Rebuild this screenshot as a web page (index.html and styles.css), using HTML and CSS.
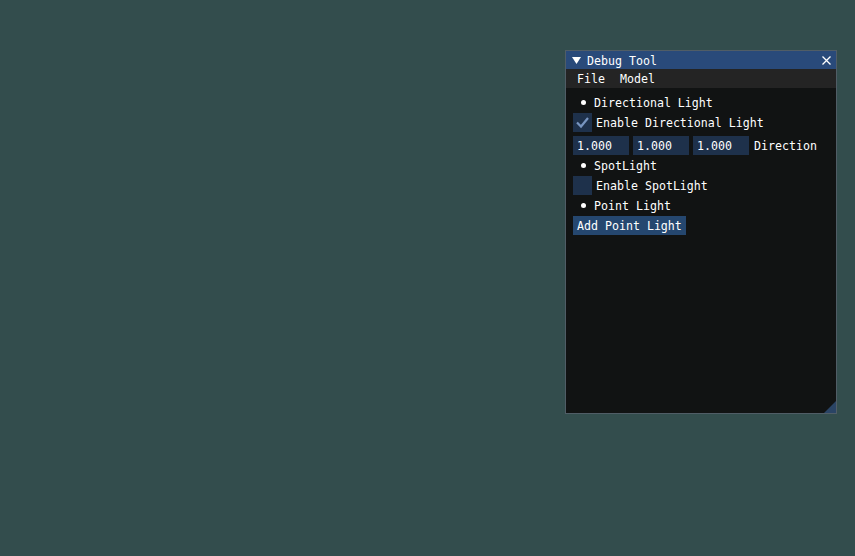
FILE: index.html
```html
<!DOCTYPE html>
<html>
<head>
<meta charset="utf-8">
<link rel="stylesheet" href="styles.css">
</head>
<body>
<div class="win">
  <div class="title">
    <svg class="arrow" width="9" height="7" viewBox="0 0 9 7"><polygon points="0,0 9,0 4.5,7" fill="#fff"/></svg>
    <span class="title-text txt">Debug Tool</span>
    <svg class="close" width="9" height="9" viewBox="0 0 9 9"><path d="M0.5 0.5 L8.5 8.5 M8.5 0.5 L0.5 8.5" stroke="#fff" stroke-width="1.3"/></svg>
  </div>
  <div class="menubar">
    <span class="menu txt">File</span>
    <span class="menu txt">Model</span>
  </div>
  <div class="content">
    <div class="bullet-row"><span class="bullet"></span><span class="txt">Directional Light</span></div>
    <div class="check-row">
      <span class="box">
        <svg width="19" height="19" viewBox="0 0 19 19"><polyline points="4,9.5 8,13.5 15,5" fill="none" stroke="#7895c0" stroke-width="2.2"/></svg>
      </span>
      <span class="txt">Enable Directional Light</span>
    </div>
    <div class="input-row">
      <span class="input">1.000</span>
      <span class="input">1.000</span>
      <span class="input">1.000</span>
      <span class="label txt">Direction</span>
    </div>
    <div class="bullet-row"><span class="bullet"></span><span class="txt">SpotLight</span></div>
    <div class="check-row">
      <span class="box"></span>
      <span class="txt">Enable SpotLight</span>
    </div>
    <div class="bullet-row"><span class="bullet"></span><span class="txt">Point Light</span></div>
    <div class="btn-row"><span class="button">Add Point Light</span></div>
  </div>
  <svg class="grip" width="12" height="12" viewBox="0 0 12 12"><polygon points="12,0 12,12 0,12" fill="#2a4465"/></svg>
</div>
</body>
</html>
```

FILE: styles.css
```css
html, body {
  margin: 0;
  padding: 0;
  width: 855px;
  height: 556px;
  background: #334d4d;
  overflow: hidden;
}
body {
  font-family: "DejaVu Sans Mono", "Liberation Mono", monospace;
  font-size: 11.62px;
  color: #ffffff;
}
.win {
  position: absolute;
  left: 565px;
  top: 50px;
  width: 272px;
  height: 364px;
  box-sizing: border-box;
  border: 1px solid #505d66;
  background: #111313;
  display: flex;
  flex-direction: column;
}
.txt {
  padding-top: 2px;
  line-height: 13px;
}
.title {
  height: 18px;
  background: #294a7a;
  display: flex;
  align-items: center;
  padding-left: 6px;
  padding-right: 5px;
  line-height: 13px;
}
.arrow {
  display: block;
}
.title-text {
  margin-left: 6px;
  flex: 1;
}
.close {
  display: block;
}
.menubar {
  height: 19px;
  background: #242424;
  display: flex;
  align-items: center;
  padding-left: 11px;
  line-height: 13px;
}
.menu + .menu {
  margin-left: 15px;
}
.content {
  padding: 8px 7px 0 7px;
  display: flex;
  flex-direction: column;
  gap: 4px;
  line-height: 13px;
}
.bullet-row {
  height: 13px;
  display: flex;
  align-items: center;
}
.bullet {
  width: 5px;
  height: 5px;
  border-radius: 50%;
  background: #fff;
  margin-left: 8px;
  margin-right: 8px;
}
.check-row {
  height: 19px;
  display: flex;
  align-items: center;
}
.box {
  width: 19px;
  height: 19px;
  background: #1e314b;
  margin-right: 4px;
  display: block;
}
.box svg { display: block; }
.input-row {
  height: 19px;
  display: flex;
  align-items: center;
  gap: 4px;
}
.input {
  width: 56px;
  height: 19px;
  box-sizing: border-box;
  background: #1e314b;
  padding: 4px 4px 2px;
}
.label {
  margin-left: 1px;
}
.btn-row {
  display: flex;
}
.button {
  height: 19px;
  box-sizing: border-box;
  padding: 4px 4px 2px;
  background: #25476f;
}
.grip {
  position: absolute;
  right: 0;
  bottom: 0;
  display: block;
}
```
